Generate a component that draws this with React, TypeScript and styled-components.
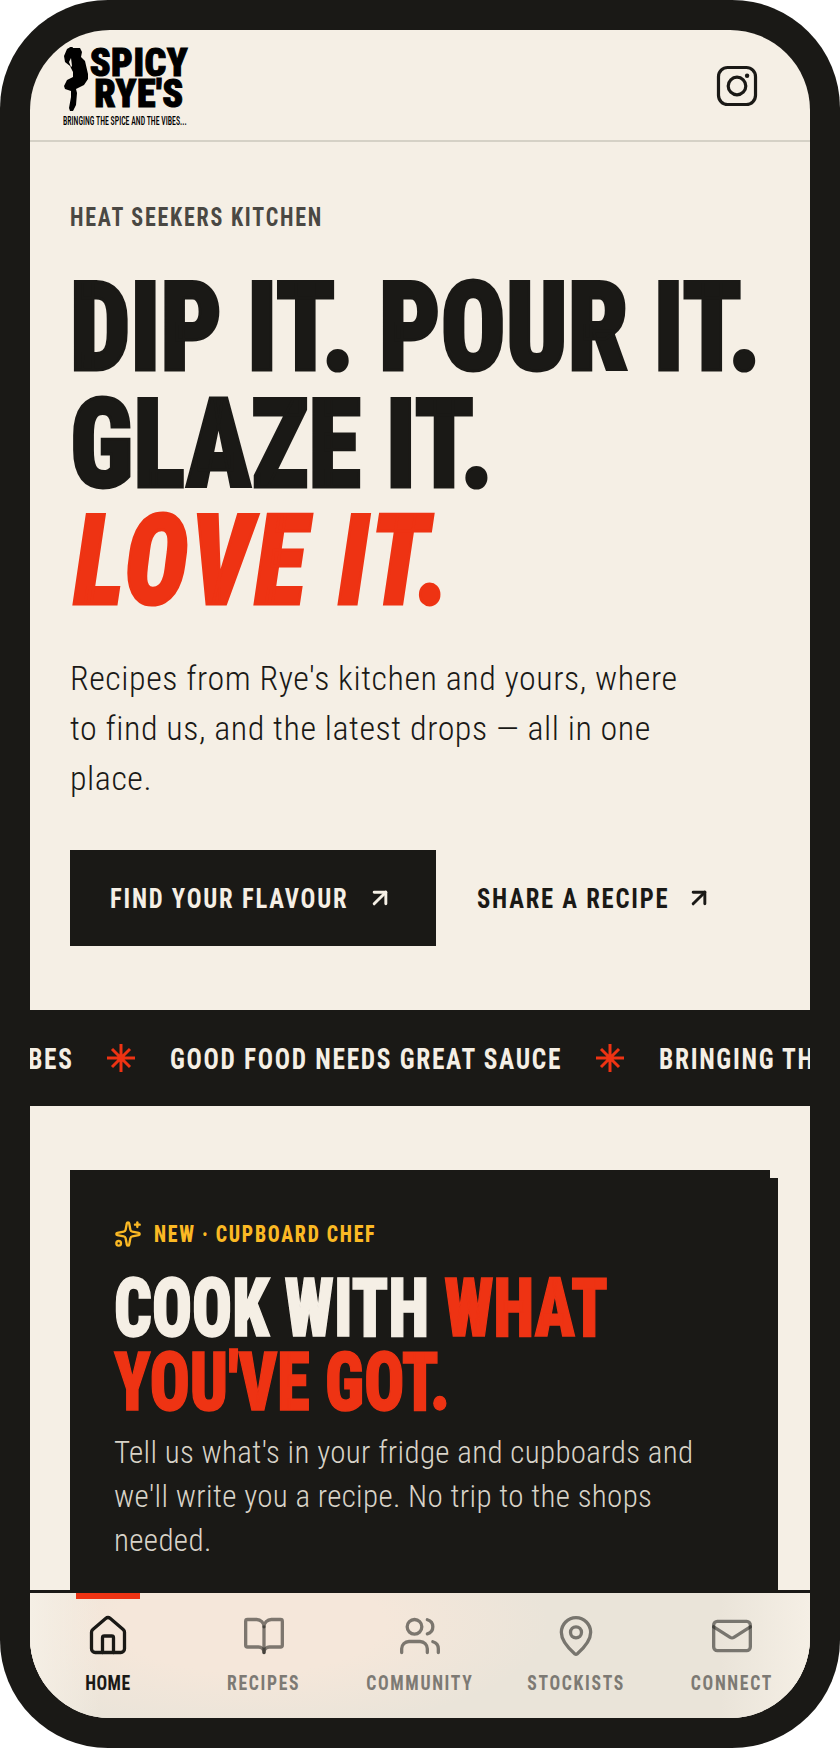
import styled, { createGlobalStyle, css } from 'styled-components';
import { ArrowUpRight, BookOpen, House, Mail, MapPin, Sparkles, Users } from 'lucide-react';

const INK = '#1a1916';
const CREAM = '#f5efe5';
const RED = '#ee3313';

const GlobalStyle = createGlobalStyle`
  * { box-sizing: border-box; }
  html, body { margin: 0; background: #fff; }
`;

// No condensed display face is installed, so Roboto's narrowest width gets squeezed a bit more
const squeeze = (k: number, origin = 'left') => css`
  display: block;
  white-space: nowrap;
  transform: scaleX(${k});
  transform-origin: ${origin};
`;

const NAV_ITEMS = [
  { label: 'HOME', Icon: House, active: true },
  { label: 'RECIPES', Icon: BookOpen },
  { label: 'COMMUNITY', Icon: Users },
  { label: 'STOCKISTS', Icon: MapPin },
  { label: 'CONNECT', Icon: Mail },
];

function Figure() {
  return (
    <FigureSvg viewBox="0 0 26 64" aria-hidden="true">
      <path
        fillRule="evenodd"
        d="M10 1l7 0 2 4-1 5 4 4 3 13 0 5-4 6-8 4 1 4-1 12-3 6-3 0-1-3 2-11 0-6-6-2-1-3 3-6 6-3 0-5-3-6-5-4-1-6 3-7 5-3zM8 11l-2 4 2 5 1-1-1-8z"
      />
    </FigureSvg>
  );
}

function Star() {
  return (
    <StarSvg viewBox="0 0 28 28" aria-hidden="true">
      <path d="M14 0v28M0 14h28M5 5l18 18M23 5L5 23" />
    </StarSvg>
  );
}

export default function App() {
  return (
    <Frame>
      <GlobalStyle />
      <Screen>
        <Header>
          <Logo>
            <Figure />
            <LogoText>
              <LogoWord>SPICY</LogoWord>
              <LogoWord>RYE'S</LogoWord>
            </LogoText>
            <LogoTag>BRINGING THE SPICE AND THE VIBES...</LogoTag>
          </Logo>
          <InstagramIcon viewBox="0 0 24 24" aria-label="Instagram">
            <rect x="1.9" y="1.9" width="20.2" height="20.2" rx="5" />
            <circle cx="12" cy="12" r="4.8" />
            <circle cx="17.5" cy="6.4" r="1.2" fill={INK} stroke="none" />
          </InstagramIcon>
        </Header>

        <Hero>
          <Eyebrow>HEAT SEEKERS KITCHEN</Eyebrow>
          <Headline>
            DIP IT. POUR IT.
            <br />
            GLAZE IT.
            <Accent>LOVE IT.</Accent>
          </Headline>
          <Lead>Recipes from Rye's kitchen and yours, where to find us, and the latest drops — all in one place.</Lead>
          <Actions>
            <PrimaryLink>
              <LinkLabel>FIND YOUR FLAVOUR</LinkLabel>
              <ArrowUpRight size={28} strokeWidth={2.5} />
            </PrimaryLink>
            <SecondaryLink>
              <LinkLabel $short>SHARE A RECIPE</LinkLabel>
              <ArrowUpRight size={28} strokeWidth={2.5} />
            </SecondaryLink>
          </Actions>
        </Hero>

        <Ticker>
          <TickerTrack>
            <TickerText $width={435}>BRINGING THE SPICE AND THE VIBES</TickerText>
            <Star />
            <TickerText $width={391}>GOOD FOOD NEEDS GREAT SAUCE</TickerText>
            <Star />
            <TickerText $width={435}>BRINGING THE SPICE AND THE VIBES</TickerText>
          </TickerTrack>
        </Ticker>

        <CardSection>
          <Card>
            <CardEyebrow>
              <Sparkles size={28} strokeWidth={2} />
              <CardEyebrowText>NEW · CUPBOARD CHEF</CardEyebrowText>
            </CardEyebrow>
            <CardTitle>
              COOK WITH <Hot>WHAT</Hot>
              <br />
              <Hot>YOU'VE GOT.</Hot>
            </CardTitle>
            <CardBody>Tell us what's in your fridge and cupboards and we'll write you a recipe. No trip to the shops needed.</CardBody>
          </Card>
        </CardSection>

        <Nav>
          {NAV_ITEMS.map(({ label, Icon, active }) => (
            <NavItem key={label} $active={active}>
              <Icon size={44} strokeWidth={1.8} />
              <NavLabel>{label}</NavLabel>
            </NavItem>
          ))}
        </Nav>
      </Screen>
    </Frame>
  );
}

const Frame = styled.div`
  width: 840px;
  height: 1748px;
  padding: 30px;
  background: ${INK};
  border-radius: 108px;
`;

const Screen = styled.div`
  position: relative;
  height: 1688px;
  overflow: hidden;
  background: ${CREAM};
  border-radius: 80px;
  font-family: "Roboto", "Open Sans", sans-serif;
  font-stretch: 75%;
  color: ${INK};
`;

const Header = styled.header`
  height: 112px;
  padding: 0 51px 0 33px;
  display: flex;
  justify-content: space-between;
  align-items: center;
  border-bottom: 2px solid #d5d1c6;
`;

const Logo = styled.div`
  width: 128px;
  display: grid;
  grid-template-columns: 26px 1fr;
  margin-top: 3px;
  color: #000;
`;

const FigureSvg = styled.svg`
  width: 26px;
  height: 64px;
  fill: #000;
`;

const LogoText = styled.div`
  display: flex;
  flex-direction: column;
  align-items: center;
  padding-top: 1px;
  margin-left: -2px;
`;

const LogoWord = styled.div`
  font-size: 38px;
  line-height: 31px;
  font-weight: 900;
  letter-spacing: 0.5px;
  -webkit-text-stroke: 1px #000;
`;

const LogoTag = styled.div`
  ${squeeze(0.6)}
  grid-column: 1 / 3;
  margin-top: 3px;
  font-size: 13px;
  line-height: 13px;
  font-weight: 500;
`;

const InstagramIcon = styled.svg`
  width: 44px;
  height: 44px;
  fill: none;
  stroke: ${INK};
  stroke-width: 1.75;
  margin-top: 2px;
`;

const Hero = styled.section`
  height: 868px;
  padding: 61px 40px 0;
`;

const Eyebrow = styled.div`
  ${squeeze(0.88)}
  font-size: 25px;
  font-weight: 700;
  letter-spacing: 2px;
  color: #4a4843;
`;

const Headline = styled.h1`
  ${squeeze(0.86)}
  margin: 37px 0 0;
  font-size: 125px;
  line-height: 117px;
  font-weight: 900;
  -webkit-text-stroke: 3px currentColor;
`;

const Accent = styled.em`
  display: block;
  padding-left: 5px;
  letter-spacing: 4.5px;
  color: ${RED};
`;

const Lead = styled.p`
  max-width: 620px;
  margin: 33px 0 0;
  font-size: 34px;
  line-height: 50px;
  font-weight: 300;
  letter-spacing: 0.55px;
`;

const Actions = styled.div`
  display: flex;
  align-items: center;
  gap: 41px;
  margin-top: 47px;
`;

const PrimaryLink = styled.a`
  height: 96px;
  width: 366px;
  flex: none;
  display: flex;
  align-items: center;
  padding: 0 40px;
  background: ${INK};
  color: ${CREAM};
`;

const SecondaryLink = styled(PrimaryLink)`
  width: auto;
  padding: 0;
  background: none;
  color: ${INK};
`;

const LinkLabel = styled.span<{ $short?: boolean }>`
  ${squeeze(0.88)}
  width: ${(p) => (p.$short ? 208 : 256)}px;
  font-size: 28px;
  font-weight: 700;
  letter-spacing: 2px;
`;

const Ticker = styled.div`
  height: 96px;
  overflow: hidden;
  background: ${INK};
  display: flex;
  align-items: center;
`;

const TickerTrack = styled.div`
  flex: none;
  display: flex;
  align-items: center;
  gap: 35px;
  margin-left: -393px;
`;

const TickerText = styled.span<{ $width: number }>`
  ${squeeze(0.845)}
  flex: none;
  width: ${(p) => p.$width}px;
  font-size: 30px;
  font-weight: 700;
  letter-spacing: 2px;
  color: ${CREAM};
`;

const StarSvg = styled.svg`
  flex: none;
  width: 28px;
  height: 28px;
  stroke: ${RED};
  stroke-width: 3;
  fill: none;
`;

const CardSection = styled.section`
  padding: 64px 40px 0;
`;

const Card = styled.article`
  height: 520px;
  padding: 50px 44px 44px;
  background: ${INK};
  box-shadow: 8px 8px 0 ${INK};
  color: ${CREAM};
`;

const CardEyebrow = styled.div`
  display: flex;
  align-items: center;
  gap: 12px;
  color: #fbb924;
`;

const CardEyebrowText = styled.span`
  ${squeeze(0.86)}
  font-size: 23px;
  font-weight: 800;
  letter-spacing: 2px;
`;

const CardTitle = styled.h2`
  ${squeeze(0.81)}
  margin: 23px 0 0;
  font-size: 82px;
  line-height: 74px;
  font-weight: 900;
  -webkit-text-stroke: 1.5px currentColor;
`;

const Hot = styled.span`
  color: ${RED};
`;

const CardBody = styled.p`
  max-width: 590px;
  margin: 12px 0 0;
  font-size: 31px;
  line-height: 44px;
  font-weight: 300;
  letter-spacing: 0.35px;
  color: #d8d3c8;
`;

const Nav = styled.nav`
  position: absolute;
  left: 0;
  right: 0;
  bottom: 0;
  height: 128px;
  display: grid;
  grid-template-columns: repeat(5, 1fr);
  border-top: 3px solid ${INK};
  background:
    linear-gradient(90deg, ${CREAM} 0, rgba(245, 239, 229, 0) 70px, rgba(245, 239, 229, 0) 690px, ${CREAM} 780px),
    radial-gradient(ellipse 300px 110px at 220px 30px, #f5e7da 45%, rgba(245, 231, 218, 0) 100%),
    #eae4d9;
`;

const NavItem = styled.a<{ $active?: boolean }>`
  position: relative;
  display: flex;
  flex-direction: column;
  align-items: center;
  padding-top: 21px;
  color: ${(p) => (p.$active ? INK : '#7d7a74')};
  letter-spacing: ${(p) => (p.$active ? '0.5px' : '2px')};

  svg {
    stroke: ${(p) => (p.$active ? INK : 'rgba(26, 25, 22, 0.55)')};
  }

  ${(p) =>
    p.$active &&
    css`
      &::before {
        content: '';
        position: absolute;
        top: 0;
        left: 46px;
        width: 64px;
        height: 6px;
        background: ${RED};
      }
    `}
`;

const NavLabel = styled.span`
  ${squeeze(0.84, 'center')}
  margin-top: 13px;
  font-size: 21px;
  line-height: 24px;
  font-weight: 700;
`;
